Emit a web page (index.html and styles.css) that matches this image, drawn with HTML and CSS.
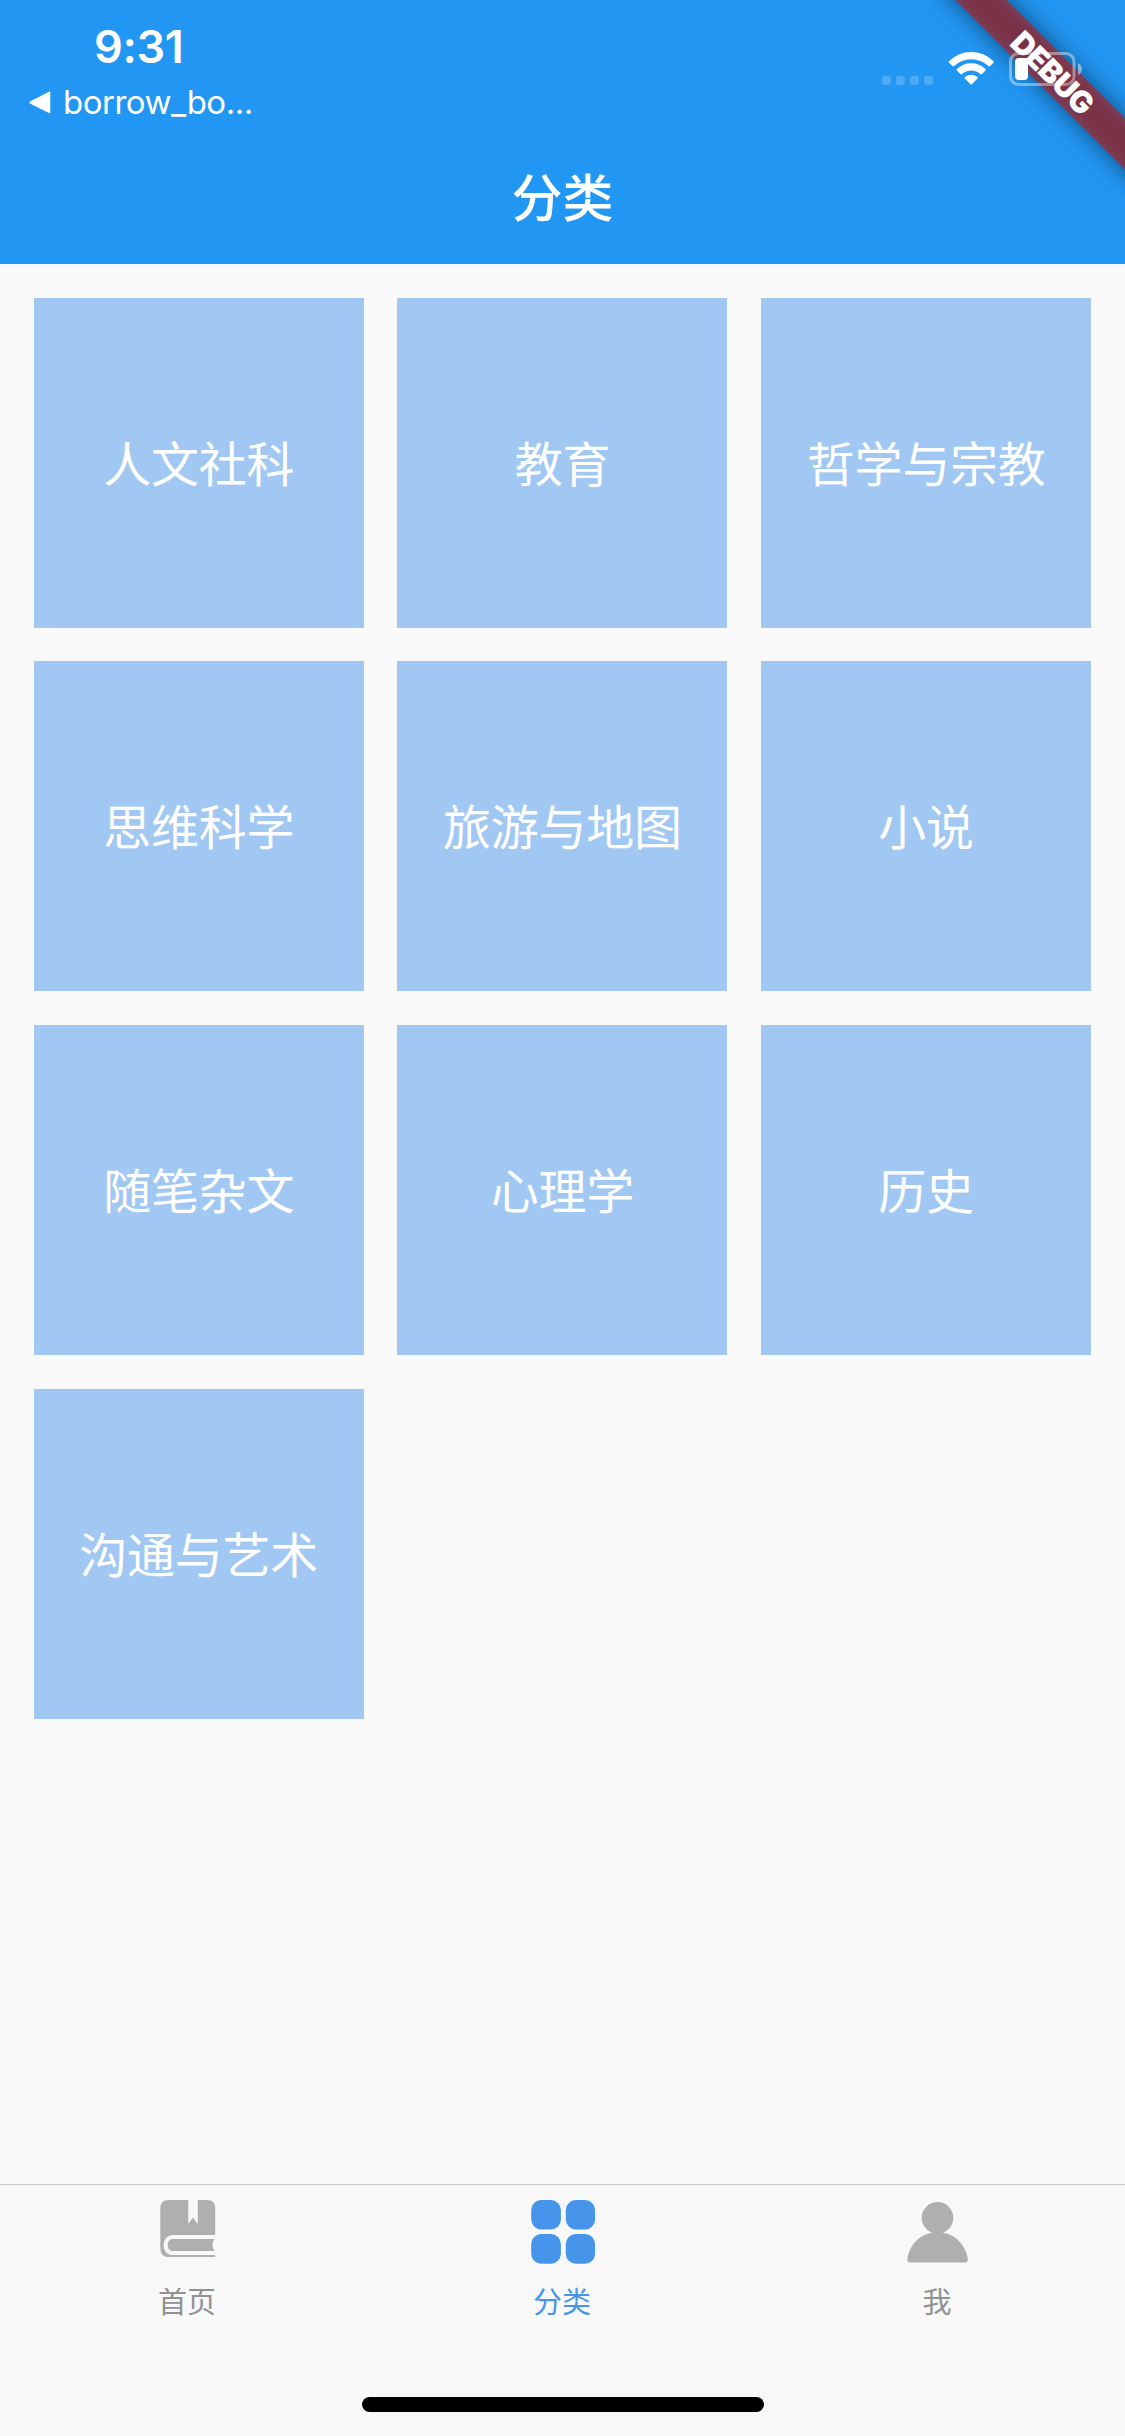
FILE: index.html
```html
<!DOCTYPE html>
<html lang="zh-CN">
<head>
<meta charset="utf-8">
<title>分类</title>
<link rel="stylesheet" href="styles.css">
</head>
<body>
<div class="screen">
  <header class="app-bar">
    <div class="status-bar">
      <div class="status-left">
        <div class="clock">9:31</div>
        <div class="back-link">
          <svg class="back-arrow" width="22" height="23" viewBox="0 0 22 23"><path d="M20 .7Q21.3 0 21.3 1.5V21Q21.3 22.700 20 22L.9 12.400Q-.3 11.500.9 10.600Z" fill="#fff"/></svg>
          <span class="back-name">borrow_bo...</span>
        </div>
      </div>
      <div class="status-icons">
        <svg width="203" height="36" viewBox="880 51 203 36">
          <g fill="#fff" fill-opacity=".2">
            <rect x="882" y="76" width="9" height="9" rx="3"/>
            <rect x="896" y="76" width="9" height="9" rx="3"/>
            <rect x="910" y="76" width="9" height="9" rx="3"/>
            <rect x="924" y="76" width="9" height="9" rx="3"/>
          </g>
          <g fill="#fff">
            <path d="M949 61.200Q958.500 52 971.200 52T993.500 61.200Q994.200 62 993.500 62.700L990 66Q989.200 66.700 988.400 66Q981 59.200 971.200 59.200T954.100 66Q953.300 66.700 952.500 66L949 62.700Q948.300 62 949 61.200Z"/>
            <path d="M956.900 69Q963 63.200 971.200 63.200T985.500 69Q986.200 69.800 985.500 70.500L982 73.900Q981.200 74.600 980.400 73.900Q976.400 70.400 971.200 70.400T962 73.900Q961.200 74.600 960.400 73.900L956.900 70.500Q956.200 69.800 956.900 69Z"/>
            <path d="M964.900 77Q967.500 74.700 971.200 74.700T977.500 77Q978.200 77.700 977.500 78.500L972 84.200Q971.200 85 970.400 84.200L964.900 78.500Q964.200 77.700 964.900 77Z"/>
            <rect x="1015" y="58" width="13" height="22" rx="4"/>
          </g>
          <rect x="1010.500" y="53.500" width="63.500" height="31" rx="8" fill="none" stroke="#fff" stroke-opacity=".4" stroke-width="3"/>
          <path d="M1078 63Q1082 65 1082 69T1078 75Z" fill="#fff" fill-opacity=".45"/>
        </svg>
      </div>
    </div>
    <h1 class="title">分类</h1>
    <div class="debug-corner">
      <div class="ribbon-shadow"></div>
      <div class="ribbon">DEBUG</div>
    </div>
  </header>

  <main class="categories">
    <div class="tile">人文社科</div>
    <div class="tile">教育</div>
    <div class="tile">哲学与宗教</div>
    <div class="tile">思维科学</div>
    <div class="tile">旅游与地图</div>
    <div class="tile">小说</div>
    <div class="tile">随笔杂文</div>
    <div class="tile">心理学</div>
    <div class="tile">历史</div>
    <div class="tile">沟通与艺术</div>
  </main>

  <nav class="tab-bar">
    <div class="tabs">
      <div class="tab">
        <svg class="tab-icon" width="75" height="75" viewBox="0 0 75 75">
          <path fill="#afafaf" d="M18.500 9H38.200V33L43 26.500 47.800 33V9H57Q65.200 9 65.200 17.200V44H22Q14 45 13.600 54 14 62.500 21 64H65.200V66H18.500Q10.300 66 10.300 57V17.200Q10.300 9 18.500 9Z"/>
          <path fill="#afafaf" d="M22.500 48H64.500Q60.500 53.500 64.500 60H22.500Q17.700 59.500 17.700 54T22.500 48Z"/>
        </svg>
        <span>首页</span>
      </div>
      <div class="tab active">
        <svg class="tab-icon" width="75" height="75" viewBox="0 0 75 75">
          <g fill="#4795eb">
            <rect x="6.200" y="9" width="29.700" height="29.500" rx="10"/>
            <rect x="40.800" y="9" width="29.300" height="29.500" rx="10"/>
            <rect x="6.200" y="43" width="29.700" height="29.700" rx="10"/>
            <rect x="40.800" y="43" width="29.300" height="29.700" rx="10"/>
          </g>
        </svg>
        <span>分类</span>
      </div>
      <div class="tab">
        <svg class="tab-icon" width="75" height="75" viewBox="0 0 75 75">
          <g fill="#afafaf">
            <circle cx="37.500" cy="26.800" r="15.800"/>
            <path d="M7.300 68C9.500 53 21 41.200 37.500 41.200S65.500 53 67.800 68Q68 71.400 65 71.400H10Q7 71.400 7.300 68Z"/>
          </g>
        </svg>
        <span>我</span>
      </div>
    </div>
    <div class="home-indicator"></div>
  </nav>
</div>
</body>
</html>
```
FILE: styles.css
```css
* { box-sizing: border-box; }

body {
  margin: 0;
  background: #fafafa;
  font-family: Inter, "Noto Sans CJK SC", sans-serif;
}

.screen {
  display: flex;
  flex-direction: column;
  width: 1125px;
  height: 2436px;
  overflow: hidden;
}

.app-bar {
  position: relative;
  isolation: isolate;
  flex: none;
  height: 264px;
  background: #2196f3;
  color: #fff;
}

.status-bar {
  display: flex;
  justify-content: space-between;
  height: 132px;
  padding: 20px 42px 0 29px;
}

.status-left {
  display: flex;
  flex-direction: column;
}

.clock {
  height: 55px;
  padding-left: 65px;
  font-size: 45px;
  font-weight: 600;
  line-height: 54px;
  letter-spacing: -.3px;
}

.back-link {
  display: flex;
  align-items: center;
  gap: 12px;
  height: 54px;
}

.back-name {
  font-size: 33px;
  line-height: 40px;
  letter-spacing: -.5px;
}

.status-icons {
  padding-top: 31px;
}

.title {
  margin: 0;
  padding-top: 25px;
  font-family: "Noto Sans CJK SC", sans-serif;
  font-size: 51px;
  font-weight: 500;
  line-height: 76px;
  text-align: center;
}

/* Diagonal banner over the top right corner, below the status icons */
.debug-corner {
  position: absolute;
  z-index: -1;
  top: 0;
  right: 0;
  width: 240px;
  height: 240px;
  overflow: hidden;
}

.ribbon,
.ribbon-shadow {
  position: absolute;
  top: 53px;
  left: 17px;
  width: 300px;
  height: 36px;
  transform: rotate(45deg);
}

.ribbon-shadow {
  background: rgba(0, 0, 0, .5);
  filter: blur(12px);
}

.ribbon {
  padding-left: 3px;
  background: rgba(183, 28, 28, .627);
  font-size: 30.5px;
  font-weight: 900;
  line-height: 37px;
  letter-spacing: -.8px;
  text-align: center;
}

.categories {
  display: grid;
  flex: 1;
  grid-template-columns: repeat(3, 330px);
  grid-auto-rows: 330px;
  gap: 33.7px;
  padding: 33.75px;
}

.tile {
  display: flex;
  align-items: center;
  justify-content: center;
  padding-bottom: 4px;
  background: #a1c7f3;
  color: #fff;
  font-family: "Noto Sans CJK SC", sans-serif;
  font-size: 48px;
  line-height: 70px;
  letter-spacing: -.25px;
}

.tab-bar {
  display: flex;
  flex: none;
  flex-direction: column;
  align-items: center;
  justify-content: space-between;
  height: 252px;
  padding-bottom: 24px;
  border-top: 1px solid #cacaca;
  background: #f8f8f8;
}

.tabs {
  display: grid;
  grid-template-columns: repeat(3, 375px);
}

.tab {
  display: flex;
  flex-direction: column;
  align-items: center;
  padding-top: 6px;
  color: #929292;
  font-family: "Noto Sans CJK SC", sans-serif;
  font-size: 29px;
  line-height: 42px;
}

.tab span {
  margin: 13px 1px 0 0;
}

.tab.active {
  color: #4795eb;
}

.home-indicator {
  width: 402px;
  height: 15px;
  border-radius: 8px;
  background: #000;
}
```
